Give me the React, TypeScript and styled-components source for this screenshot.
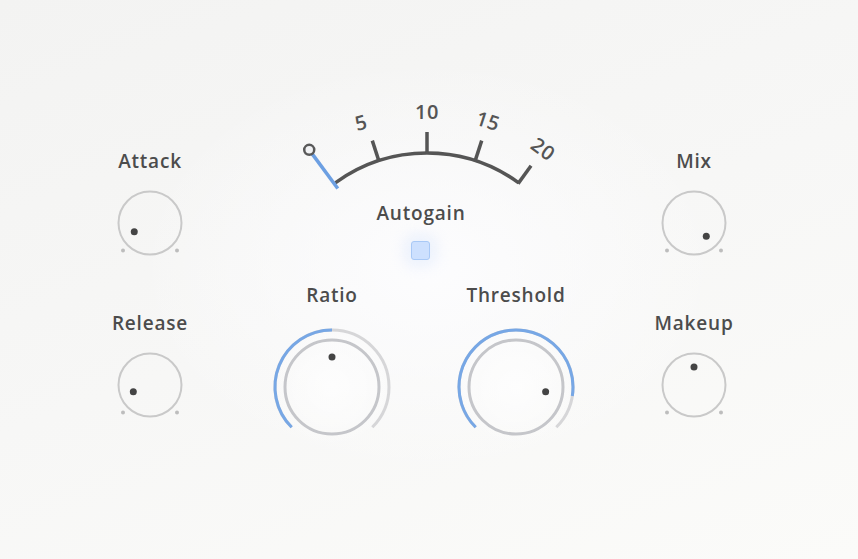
import styled, { createGlobalStyle } from 'styled-components';

const GlobalStyle = createGlobalStyle`
  html, body {
    margin: 0;
    padding: 0;
  }
  body {
    font-family: "Open Sans", "Liberation Sans", sans-serif;
    background: #f6f6f5;
  }
`;

const Panel = styled.div`
  width: 858px;
  height: 559px;
  display: flex;
  align-items: flex-start;
  padding-left: 100px;
  box-sizing: border-box;
  overflow: hidden;
  background:
    radial-gradient(ellipse 420px 300px at 50% 48%, rgba(253, 253, 255, 0.9) 0%, rgba(253, 253, 255, 0) 70%),
    linear-gradient(160deg, #f3f3f2 0%, #f7f7f6 50%, #fbfbf9 100%);
`;

const SideColumn = styled.div<{ $gap: number }>`
  width: 100px;
  padding-top: 150px;
  margin-right: ${(p) => p.$gap}px;
  display: flex;
  flex-direction: column;
  align-items: center;
  gap: 51px;
`;

const CenterColumn = styled.div`
  width: 344px;
  margin-right: 48px;
  padding-top: 95px;
  display: flex;
  flex-direction: column;
  align-items: center;
`;

const KnobBlock = styled.div`
  display: flex;
  flex-direction: column;
  align-items: center;
`;

const Label = styled.div<{ $space?: number }>`
  font-size: 19px;
  line-height: 22px;
  font-weight: 600;
  color: #4c4c4c;
  letter-spacing: 0.8px;
  white-space: nowrap;
  margin-bottom: ${(p) => p.$space ?? 13}px;
`;

const AutogainLabel = styled(Label)`
  margin-top: 7px;
  margin-bottom: 17px;
  margin-right: 6px;
`;

const Checkbox = styled.div`
  width: 17px;
  height: 17px;
  border-radius: 3px;
  background: #cde0fe;
  border: 1.5px solid #a9c9f6;
  box-shadow: 0 0 14px 6px rgba(214, 228, 252, 0.45);
  margin-left: -7px;
`;

const BigRow = styled.div`
  margin-top: 24px;
  display: flex;
  justify-content: center;
  gap: 60px;
`;

const MeterText = styled.text`
  font-family: "Open Sans", "Liberation Sans", sans-serif;
  font-size: 20px;
  font-weight: 600;
  letter-spacing: 0.5px;
  fill: #555;
`;

const polar = (cx: number, cy: number, r: number, deg: number) => {
  const a = (deg * Math.PI) / 180;
  return [cx + r * Math.sin(a), cy - r * Math.cos(a)];
};

const arc = (cx: number, cy: number, r: number, a1: number, a2: number) => {
  const [x1, y1] = polar(cx, cy, r, a1);
  const [x2, y2] = polar(cx, cy, r, a2);
  const large = a2 - a1 > 180 ? 1 : 0;
  return `M ${x1} ${y1} A ${r} ${r} 0 ${large} 1 ${x2} ${y2}`;
};

const SmallKnob = ({ label, angle }: { label: string; angle: number }) => {
  const [ix, iy] = polar(38, 38, 18, angle);
  return (
    <KnobBlock>
      <Label>{label}</Label>
      <svg width="76" height="76" viewBox="0 0 76 76">
        <circle cx="38" cy="38" r="31.5" fill="none" stroke="#c9c9c9" strokeWidth="2" />
        <circle cx="11" cy="65.5" r="2" fill="#bdbdbd" />
        <circle cx="65" cy="65.5" r="2" fill="#bdbdbd" />
        <circle cx={ix} cy={iy} r="3.5" fill="#444" />
      </svg>
    </KnobBlock>
  );
};

const BigKnob = ({ label, angle }: { label: string; angle: number }) => {
  const [ix, iy] = polar(62, 62, 30, angle);
  return (
    <KnobBlock>
      <Label $space={19}>{label}</Label>
      <svg width="124" height="124" viewBox="0 0 124 124">
        <defs>
          <radialGradient id={`glow-${label}`}>
            <stop offset="0%" stopColor="#ffffff" stopOpacity="0.7" />
            <stop offset="100%" stopColor="#ffffff" stopOpacity="0" />
          </radialGradient>
        </defs>
        <circle cx="62" cy="62" r="62" fill={`url(#glow-${label})`} />
        <path d={arc(62, 62, 57, -135, 135)} fill="none" stroke="#d6d6d8" strokeWidth="3" />
        <path d={arc(62, 62, 57, -135, angle)} fill="none" stroke="#77a7e5" strokeWidth="3" />
        <circle cx="62" cy="62" r="47" fill="none" stroke="#c5c6ca" strokeWidth="3" />
        <circle cx={ix} cy={iy} r="3.5" fill="#444" />
      </svg>
    </KnobBlock>
  );
};

const Meter = () => {
  const cx = 175;
  const cy = 214;
  const ticks = [-18, 0, 18, 36];
  const labels: [string, number][] = [
    ['5', -14],
    ['10', 0],
    ['15', 18],
    ['20', 36],
  ];
  const needle = -36.5;
  const [n1x, n1y] = polar(cx, cy, 150, needle);
  const [n2x, n2y] = polar(cx, cy, 198, needle);
  const [n3x, n3y] = polar(cx, cy, 193, needle);
  return (
    <svg width="344" height="100" viewBox="0 0 344 100" overflow="visible">
      <path d={arc(cx, cy, 156, -36, 36)} fill="none" stroke="#555" strokeWidth="3.5" />
      {ticks.map((t) => {
        const [x1, y1] = polar(cx, cy, 155, t);
        const [x2, y2] = polar(cx, cy, 177, t);
        return <line key={t} x1={x1} y1={y1} x2={x2} y2={y2} stroke="#555" strokeWidth="3.5" />;
      })}
      {labels.map(([txt, a], i) => {
        const [x, y] = polar(cx, cy, 198, i === 0 ? -19.5 : a);
        return (
          <MeterText
            key={txt}
            x={x}
            y={y}
            textAnchor="middle"
            dominantBaseline="central"
            transform={`rotate(${a} ${x} ${y})`}
          >
            {txt}
          </MeterText>
        );
      })}
      <line x1={n1x} y1={n1y} x2={n3x} y2={n3y} stroke="#6c9fe2" strokeWidth="3.5" />
      <circle cx={n2x} cy={n2y} r="5" fill="#eceef2" fillOpacity="0.5" stroke="#595959" strokeWidth="2.5" />
    </svg>
  );
};

export default function App() {
  return (
    <>
      <GlobalStyle />
      <Panel>
        <SideColumn $gap={52}>
          <SmallKnob label="Attack" angle={-119} />
          <SmallKnob label="Release" angle={-112} />
        </SideColumn>
        <CenterColumn>
          <Meter />
          <AutogainLabel>Autogain</AutogainLabel>
          <Checkbox />
          <BigRow>
            <BigKnob label="Ratio" angle={0} />
            <BigKnob label="Threshold" angle={99} />
          </BigRow>
        </CenterColumn>
        <SideColumn $gap={0}>
          <SmallKnob label="Mix" angle={137} />
          <SmallKnob label="Makeup" angle={0} />
        </SideColumn>
      </Panel>
    </>
  );
}
